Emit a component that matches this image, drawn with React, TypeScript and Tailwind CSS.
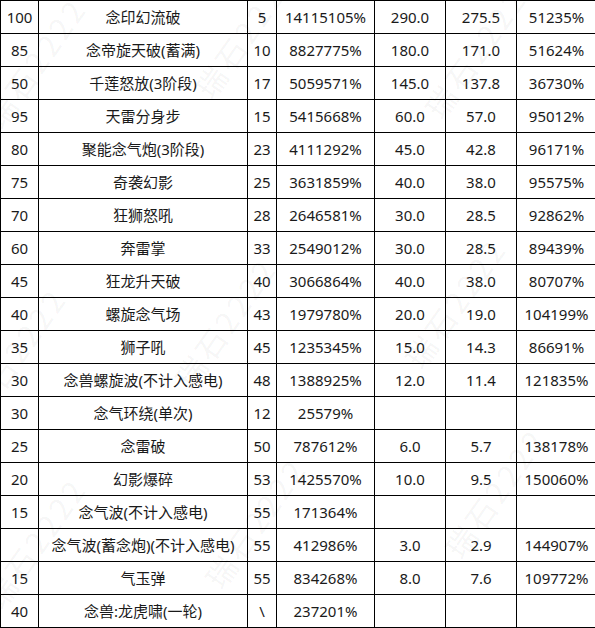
const rows: string[][] = [
  ['100', '念印幻流破', '5', '14115105%', '290.0', '275.5', '51235%'],
  ['85', '念帝旋天破(蓄满)', '10', '8827775%', '180.0', '171.0', '51624%'],
  ['50', '千莲怒放(3阶段)', '17', '5059571%', '145.0', '137.8', '36730%'],
  ['95', '天雷分身步', '15', '5415668%', '60.0', '57.0', '95012%'],
  ['80', '聚能念气炮(3阶段)', '23', '4111292%', '45.0', '42.8', '96171%'],
  ['75', '奇袭幻影', '25', '3631859%', '40.0', '38.0', '95575%'],
  ['70', '狂狮怒吼', '28', '2646581%', '30.0', '28.5', '92862%'],
  ['60', '奔雷掌', '33', '2549012%', '30.0', '28.5', '89439%'],
  ['45', '狂龙升天破', '40', '3066864%', '40.0', '38.0', '80707%'],
  ['40', '螺旋念气场', '43', '1979780%', '20.0', '19.0', '104199%'],
  ['35', '狮子吼', '45', '1235345%', '15.0', '14.3', '86691%'],
  ['30', '念兽螺旋波(不计入感电)', '48', '1388925%', '12.0', '11.4', '121835%'],
  ['30', '念气环绕(单次)', '12', '25579%', '', '', ''],
  ['25', '念雷破', '50', '787612%', '6.0', '5.7', '138178%'],
  ['20', '幻影爆碎', '53', '1425570%', '10.0', '9.5', '150060%'],
  ['15', '念气波(不计入感电)', '55', '171364%', '', '', ''],
  ['', '念气波(蓄念炮)(不计入感电)', '55', '412986%', '3.0', '2.9', '144907%'],
  ['15', '气玉弹', '55', '834268%', '8.0', '7.6', '109772%'],
  ['40', '念兽:龙虎啸(一轮)', '\\', '237201%', '', '', ''],
];

// faint diagonal watermark marks laid over the sheet
const marks = [
  { left: -40, top: 40 },
  { left: 170, top: 10 },
  { left: 400, top: 30 },
  { left: -60, top: 330 },
  { left: 150, top: 300 },
  { left: 380, top: 280 },
  { left: -40, top: 520 },
  { left: 180, top: 500 },
  { left: 420, top: 470 },
];

export default function App() {
  return (
    <div className="relative w-[595px] h-[628px] overflow-hidden bg-white font-['Noto_Sans','Noto_Sans_CJK_SC',sans-serif] text-[15px] text-[#1a1a1a]">
      <div className="w-[640px] border-l border-t border-black">
        {rows.map((r, i) => (
          <div key={i} className="grid grid-cols-[38px_209px_29px_98px_71px_71px_80px] h-[33px]">
            {r.map((c, j) => (
              <div
                key={j}
                className="flex items-center justify-center border-r border-b border-black whitespace-nowrap leading-none"
              >
                {c}
              </div>
            ))}
          </div>
        ))}
      </div>
      {marks.map((m, i) => (
        <div
          key={i}
          className="absolute pointer-events-none -rotate-[55deg] text-[30px] tracking-[4px] text-black/[0.05] whitespace-nowrap font-['Noto_Sans_CJK_SC',sans-serif]"
          style={{ left: m.left, top: m.top }}
        >
          瑞石2222
        </div>
      ))}
    </div>
  );
}
